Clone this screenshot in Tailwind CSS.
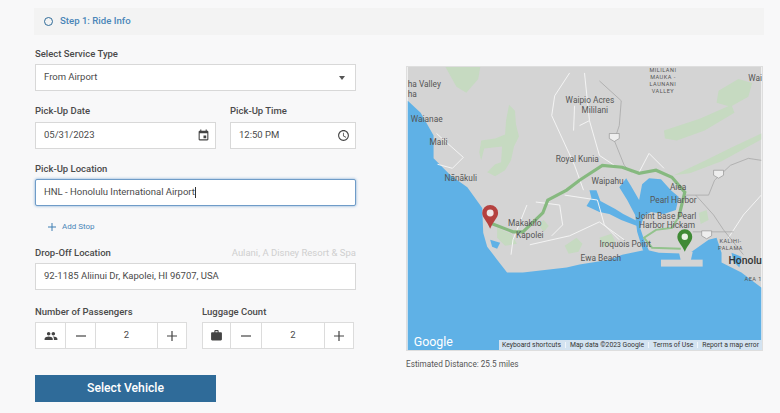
<!DOCTYPE html>
<html lang="en">
<head>
    <meta charset="UTF-8">
    <meta name="viewport" content="width=device-width, initial-scale=1.0">
    <script src="https://cdn.jsdelivr.net/npm/@tailwindcss/browser@4"></script>
    <title>Ride Info</title>
</head>
<body class="bg-[#f8f8f9] font-['Roboto',sans-serif] text-[#4a4a4a] overflow-hidden">
    <div class="w-[780px] h-[413px] pl-[34px] pr-4 pt-2 overflow-hidden">

        <!-- Step header -->
        <div class="h-[27px] bg-[#f3f3f3] flex items-center pl-[10px] gap-[7px]">
            <span class="w-[9px] h-[9px] rounded-full border border-[#2f6b99]"></span>
            <span class="text-[9.6px] font-medium text-[#4a86b8]">Step 1: Ride Info</span>
        </div>

        <div class="flex">
            <!-- Form -->
            <div class="w-[321px] ml-px flex flex-col">
                <label class="mt-[12px] h-[14px] leading-[14px] text-[9.5px] font-medium">Select Service Type</label>
                <div class="mt-[3px] h-[27px] bg-white border border-[#d8d8d8] flex items-center justify-between pl-[8px] pr-[10px] text-[9.5px]">
                    From Airport
                    <span class="w-0 h-0 border-x-[3.5px] border-x-transparent border-t-[4px] border-t-[#555]"></span>
                </div>

                <div class="flex gap-[14px] mt-[13px]">
                    <div class="w-[181px]">
                        <label class="block h-[14px] leading-[14px] text-[9.5px] font-medium">Pick-Up Date</label>
                        <div class="mt-[4px] h-[27px] bg-white border border-[#d8d8d8] flex items-center justify-between pl-[8px] pr-[5px] text-[9.5px]">
                            05/31/2023
                            <svg class="w-[13px] h-[13px]" viewBox="0 0 24 24" fill="#444"><path d="M17 12h-5v5h5v-5zM16 1v2H8V1H6v2H5c-1.11 0-1.99.9-1.99 2L3 19c0 1.1.89 2 2 2h14c1.1 0 2-.9 2-2V5c0-1.1-.9-2-2-2h-1V1h-2zm3 18H5V8h14v11z"/></svg>
                        </div>
                    </div>
                    <div class="w-[126px]">
                        <label class="block h-[14px] leading-[14px] text-[9.5px] font-medium">Pick-Up Time</label>
                        <div class="mt-[4px] h-[27px] bg-white border border-[#d8d8d8] flex items-center justify-between pl-[8px] pr-[5px] text-[9.5px]">
                            12:50 PM
                            <svg class="w-[13px] h-[13px]" viewBox="0 0 24 24" fill="#444"><path d="M11.99 2C6.47 2 2 6.48 2 12s4.47 10 9.99 10C17.52 22 22 17.52 22 12S17.52 2 11.99 2zM12 20c-4.42 0-8-3.58-8-8s3.58-8 8-8 8 3.58 8 8-3.58 8-8 8zm.5-13H11v6l5.25 3.15.75-1.23-4.5-2.67z"/></svg>
                        </div>
                    </div>
                </div>

                <label class="mt-[13px] h-[14px] leading-[14px] text-[9.5px] font-medium">Pick-Up Location</label>
                <div class="mt-[3px] h-[27px] bg-white border border-[#6f9cc8] rounded-[2px] shadow-[0_0_3px_#7aa7d4] flex items-center pl-[8px] text-[9.5px]">
                    HNL - Honolulu International Airport<span class="w-px h-[11px] bg-[#333]"></span>
                </div>

                <div class="mt-[15px] h-3 flex items-center pl-[13px] gap-[6px] text-[8px] text-[#4a86b8]">
                    <svg class="w-2 h-2" viewBox="0 0 8 8" stroke="#3f7fb3" stroke-width="1"><path d="M4 0v8M0 4h8"/></svg>
                    Add Stop
                </div>

                <div class="mt-[13px] flex justify-between items-center h-[14px]">
                    <label class="text-[9.5px] font-medium">Drop-Off Location</label>
                    <span class="text-[9.5px] text-[#cfcfcf]">Aulani, A Disney Resort &amp; Spa</span>
                </div>
                <div class="mt-[3px] h-[27px] bg-white border border-[#d8d8d8] flex items-center pl-[8px] text-[9.5px]">
                    92-1185 Aliinui Dr, Kapolei, HI 96707, USA
                </div>

                <div class="flex gap-[15px] mt-[15px]">
                    <div class="w-[152px]">
                        <label class="block h-[14px] leading-[14px] text-[9.5px] font-medium">Number of Passengers</label>
                        <div class="mt-[3px] h-[27px] bg-white border border-[#dcdcdc] flex items-center text-[9.5px]">
                            <span class="w-[30px] h-full flex items-center justify-center border-r border-[#dcdcdc]">
                                <svg class="w-[14px] h-[14px]" viewBox="0 0 24 24" fill="#444"><path d="M16 11c1.66 0 2.99-1.34 2.99-3S17.66 5 16 5c-1.66 0-3 1.34-3 3s1.34 3 3 3zm-8 0c1.66 0 2.99-1.34 2.99-3S9.66 5 8 5C6.34 5 5 6.34 5 8s1.34 3 3 3zm0 2c-2.33 0-7 1.17-7 3.5V19h14v-2.5c0-2.33-4.67-3.5-7-3.5zm8 0c-.29 0-.62.02-.97.05 1.16.84 1.97 1.97 1.97 3.45V19h6v-2.5c0-2.33-4.67-3.5-7-3.5z"/></svg>
                            </span>
                            <span class="w-[30px] h-full flex items-center justify-center border-r border-[#dcdcdc]">
                                <svg class="w-[10px] h-[10px]" viewBox="0 0 10 10" stroke="#444" stroke-width="1.2"><path d="M0 5h10"/></svg>
                            </span>
                            <span class="w-[62px] h-full flex items-center justify-center border-r border-[#dcdcdc]">2</span>
                            <span class="flex-1 h-full flex items-center justify-center">
                                <svg class="w-[10px] h-[10px]" viewBox="0 0 10 10" stroke="#444" stroke-width="1.2"><path d="M0 5h10M5 0v10"/></svg>
                            </span>
                        </div>
                    </div>
                    <div class="w-[152px]">
                        <label class="block h-[14px] leading-[14px] text-[9.5px] font-medium">Luggage Count</label>
                        <div class="mt-[3px] h-[27px] bg-white border border-[#dcdcdc] flex items-center text-[9.5px]">
                            <span class="w-[28px] h-full flex items-center justify-center border-r border-[#dcdcdc]">
                                <svg class="w-[13px] h-[13px]" viewBox="0 0 24 24" fill="#444"><path d="M20 6h-4V4c0-1.11-.89-2-2-2h-4c-1.11 0-2 .89-2 2v2H4c-1.11 0-1.99.89-1.99 2L2 19c0 1.11.89 2 2 2h16c1.11 0 2-.89 2-2V8c0-1.11-.89-2-2-2zm-6 0h-4V4h4v2z"/></svg>
                            </span>
                            <span class="w-[31px] h-full flex items-center justify-center border-r border-[#dcdcdc]">
                                <svg class="w-[10px] h-[10px]" viewBox="0 0 10 10" stroke="#444" stroke-width="1.2"><path d="M0 5h10"/></svg>
                            </span>
                            <span class="w-[63px] h-full flex items-center justify-center border-r border-[#dcdcdc]">2</span>
                            <span class="flex-1 h-full flex items-center justify-center">
                                <svg class="w-[10px] h-[10px]" viewBox="0 0 10 10" stroke="#444" stroke-width="1.2"><path d="M0 5h10M5 0v10"/></svg>
                            </span>
                        </div>
                    </div>
                </div>

                <button class="mt-[26px] w-[181px] h-[27px] bg-[#2f6b99] text-white text-[12.2px] font-medium">Select Vehicle</button>
            </div>

            <!-- Map -->
            <div class="ml-[50px] mt-[31px] w-[357px]">
                <div class="relative w-[357px] h-[285px] border border-[#dedede] overflow-hidden">
                    <svg class="block w-full h-full font-['Roboto',sans-serif]" viewBox="407 66 356 285" fill="#555" font-size="8.4">
                        <rect x="407" y="66" width="356" height="285" fill="#d4d4d4"/>

                        <!-- parks -->
                        <g fill="#c6dac1">
                            <path d="M445 66h35l-2 12-12 14-10-6z"/>
                            <path d="M509 104l6 6 1 14 3 12-5 10-3 14-6 10-10 6-8-4 8-8 6-2 1-16-18 2-3 12-2-8 2-12 14-2 10-4 1-14z"/>
                            <path d="M720 90l20-12 14 4-4 14-18 10-14-4z"/>
                            <path d="M665 130l36-12 32-14 3 8-30 18-28 10-12-2z"/>
                            <path d="M675 175l30-14 28-14 30-14v6l-40 22-32 12z"/>
                            <path d="M497 228l14 6 6 10-12 2-8-8z"/>
                            <path d="M565 246l12-8 6 6-4 8-10 2z"/>
                            <path d="M600 238l12-4 4 8-12 6z"/>
                            <path d="M538 224l6-4 5 6-5 6z"/>
                            <path d="M700 213l8-3 2 10-8 4z"/>
                        </g>

                        <!-- sea -->
                        <path fill="#5fb1e6" d="M407 100L420 112L433 135L433 158L450 175L467 187L482 208L483 233L487 247L497 260L507 273L523 273L567 268L580 265L610 260L623 255L647 250L660 253L690 254L710 240L718 238L723 253L723 263L743 273L763 288V351H407Z"/>
                        <!-- bays and lochs -->
                        <g fill="#5fb1e6">
                            <path d="M490 240L500 243L497 249L492 247Z"/>
                            <path d="M620 187L627 178L632 186L640 200L643 184L650 178L662 179L672 190L680 197L677 210L665 214L652 212L645 216L641 228L645 240L650 251L644 251L638 232L636 215L628 200Z"/>
                            <path d="M590 190L597 190L601 201L616 209L624 214L638 221L638 226L622 220L610 214L600 212L587 206L592 198Z"/>
                            <path d="M733 253L743 257L741 268L735 262Z"/>
                        </g>
                        <rect x="662" y="260" width="42" height="7" fill="#d4d4d4"/>
                        <path fill="#d4d4d4" d="M680 252h14l-2 9h-10z"/>

                        <!-- roads -->
                        <g fill="none" stroke="#f4f4f4" stroke-width="1">
                            <path d="M436 133L463 157L452 168L437 164"/>
                            <path d="M570 72L555 95L552 115L575 165L584 190"/>
                            <path d="M585 72L590 120L600 155L615 165"/>
                            <path d="M511 255L513 240L527 205"/>
                            <path d="M640 172L650 153L665 168"/>
                            <path d="M536 202L560 205L563 225L552 236"/>
                            <path d="M530 245L570 236L600 222L625 240"/>
                            <path d="M565 195L598 200L605 225L620 240"/>
                            <path d="M745 215L763 195"/>
                            <path d="M730 238L745 215"/>
                            <path d="M575 105L574 130M590 120L580 125"/>
                        </g>
                        <g fill="none" stroke="#a8a8a8" stroke-width="0.8">
                            <path d="M600 80L622 100L620 125L615 140L625 165L632 172"/>
                            <path d="M685 195L710 195L716 180L732 165L750 158L763 160"/>
                            <path d="M697 195L715 215L725 230L745 255"/>
                            <path d="M694 232L735 232"/>
                        </g>

                        <!-- route -->
                        <path fill="none" stroke="#93c38d" stroke-width="2" d="M680 217L673 228L657 230L645 238L653 248L682 249"/>
                        <path fill="none" stroke="#86b97f" stroke-width="3.2" d="M490 223L513 232L523 232L543 213L548 200L567 190L580 180L603 165L623 167L640 173L657 170L673 177L686 192L680 217"/>

                        <!-- labels -->
                        <g>
                            <text x="407" y="86">ha Valley</text>
                            <text x="407" y="96">ha</text>
                            <text x="410" y="121">Waianae</text>
                            <text x="429" y="145">Maili</text>
                            <text x="444" y="181">Nānākuli</text>
                            <text x="566" y="102">Waipio Acres</text>
                            <text x="582" y="112">Mililani</text>
                            <text x="556" y="162">Royal Kunia</text>
                            <text x="592" y="184">Waipahu</text>
                            <text x="671" y="190">Aiea</text>
                            <text x="651" y="203">Pearl Harbor</text>
                            <text x="637" y="219">Joint Base Pearl</text>
                            <text x="640" y="228">Harbor Hickam</text>
                            <text x="508" y="226">Makakilo</text>
                            <text x="516" y="238">Kapolei</text>
                            <text x="600" y="247">Iroquois Point</text>
                            <text x="581" y="261">Ewa Beach</text>
                            <text x="750" y="80">Wai</text>
                            <text x="730" y="264" font-size="10.5" font-weight="500" fill="#333">Honolulu</text>
                        </g>
                        <g font-size="5.6" letter-spacing="0.5" text-anchor="middle">
                            <text x="664" y="71">MILILANI</text>
                            <text x="664" y="78">MAUKA -</text>
                            <text x="664" y="85">LAUNANI</text>
                            <text x="664" y="92">VALLEY</text>
                            <text x="732" y="243">KALIHI-</text>
                            <text x="732" y="250">PALAMA</text>
                            <text x="755" y="282">AEA 1</text>
                        </g>

                        <!-- highway shields -->
                        <g fill="#eee" stroke="#888" stroke-width="0.6">
                            <path d="M610 133h10v5l-5 3-5-3z"/>
                            <path d="M715 170h10v5l-5 3-5-3z"/>
                            <path d="M703 231h10v5l-5 3-5-3z"/>
                        </g>

                        <!-- pins -->
                        <path fill="#b5413f" d="M490 205a8 8 0 0 1 8 8c0 5-5 8-8 16c-3-8-8-11-8-16a8 8 0 0 1 8-8z"/>
                        <circle cx="490" cy="213" r="3.5" fill="#f0e6e6"/>
                        <path fill="#3f8a35" d="M686 229.500a7.500 7.500 0 0 1 7.500 7.500c0 5-4.500 8-7.500 15c-3-7-7.500-10-7.500-15a7.500 7.500 0 0 1 7.500-7.500z"/>
                        <circle cx="686" cy="237" r="3.200" fill="#e9f2e6"/>

                        <text x="413" y="347" font-size="12.500" fill="#fff">Google</text>
                    </svg>
                    <!-- attribution strip -->
                    <div class="absolute right-0 bottom-0 h-[10px] flex items-center bg-[#d3e3f1] text-[6.8px] text-[#333] leading-none">
                        <span class="pl-[3px] pr-[4px] border-r border-[#f0f5fa]">Keyboard shortcuts</span>
                        <span class="px-[4px] border-r border-[#f0f5fa]">Map data ©2023 Google</span>
                        <span class="px-[4px] border-r border-[#f0f5fa]">Terms of Use</span>
                        <span class="pl-[4px] pr-[3px]">Report a map error</span>
                    </div>
                </div>
                <p class="mt-[8px] text-[8.2px] leading-[11px] text-[#555]">Estimated Distance: 25.5 miles</p>
            </div>
        </div>
    </div>
</body>
</html>
